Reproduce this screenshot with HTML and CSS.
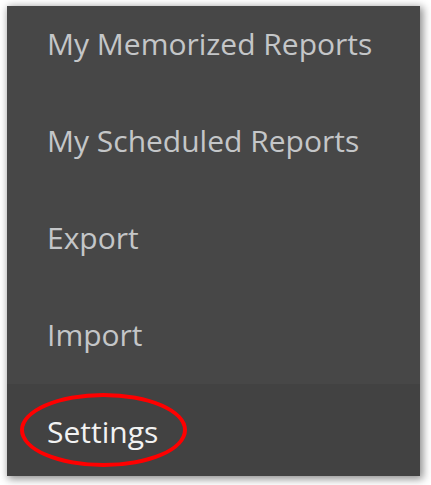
FILE: index.html
```html
<!DOCTYPE html>
<html>
<head>
<meta charset="utf-8">
<link rel="stylesheet" href="styles.css">
</head>
<body>
<nav class="menu">
  <div class="item first">My Memorized Reports</div>
  <div class="item">My Scheduled Reports</div>
  <div class="item">Export</div>
  <div class="item">Import</div>
  <div class="item settings"><span class="label">Settings</span><span class="ring"></span></div>
</nav>
</body>
</html>
```
FILE: styles.css
```css
html, body { margin: 0; padding: 0; background: #ffffff; }
body { width: 431px; height: 485px; overflow: hidden; }
.menu {
  margin: 6px 0 0 7px;
  width: 413px;
  height: 470px;
  background: #474747;
  box-shadow: 2px 2px 8px 1px rgba(0,0,0,0.45);
  display: flex;
  flex-direction: column;
  font-family: "Open Sans", sans-serif;
  font-size: 30px;
}
.item {
  padding: 28px 0 29px 40px;
  line-height: 40px;
  color: #c4c6c8;
  white-space: nowrap;
}
.item.first { padding-top: 18px; }
.item.settings {
  background: #424242;
  color: #f2f2f2;
  padding-bottom: 24px;
  flex: 1;
  position: relative;
}
.ring {
  position: absolute;
  left: 13px;
  top: 9px;
  width: 159px;
  height: 66px;
  border: 4px solid #ff0000;
  border-radius: 50%;
}
```
